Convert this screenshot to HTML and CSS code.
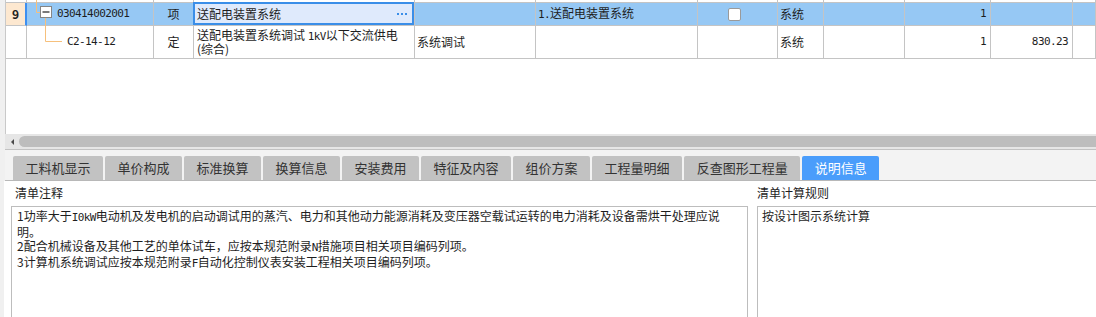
FILE: index.html
```html
<!DOCTYPE html>
<html lang="zh-CN">
<head>
<meta charset="utf-8">
<title>清单说明信息</title>
<link rel="stylesheet" href="styles.css">
</head>
<body>
<div class="app">
  <div class="top">
    <div class="grid">
      <div class="c"></div><div class="c"></div><div class="c"></div><div class="c"></div><div class="c"></div><div class="c"></div>
      <div class="c"></div><div class="c"></div><div class="c"></div><div class="c"></div><div class="c"></div><div class="c"></div>

      <div class="c rn rn-sel">9</div>
      <div class="c row-sel code code-1">
        <svg class="tree" width="40" height="45" viewBox="0 0 40 45">
          <path d="M9.5 -3 V9.5 H13.5" fill="none" stroke="#f6c07c" stroke-width="1"/>
          <path d="M18.5 14.5 V38.5 H35" fill="none" stroke="#f6c07c" stroke-width="1"/>
          <rect x="13.5" y="3.5" width="11" height="11" fill="#ffffff" stroke="#858585"/>
          <path d="M15.5 9 H22.5" stroke="#222" stroke-width="1.2"/>
        </svg>
        <span class="num">030414002001</span>
      </div>
      <div class="c row-sel ctr">项</div>
      <div class="c name-sel"><span>送配电装置系统</span><span class="dots"><i></i><i></i><i></i></span></div>
      <div class="c row-sel"></div>
      <div class="c row-sel pl"><span><span class="num">1.</span>送配电装置系统</span></div>
      <div class="c row-sel ctr"><span class="chk"></span></div>
      <div class="c row-sel">系统</div>
      <div class="c row-sel"></div>
      <div class="c row-sel rt"><span class="num">1</span></div>
      <div class="c row-sel"></div>
      <div class="c row-sel"></div>

      <div class="c rn"></div>
      <div class="c code code-2"><span class="num">C2-14-12</span></div>
      <div class="c ctr">定</div>
      <div class="c name-2"><div class="wrap">送配电装置系统调试 <span class="num">1kV</span>以下交流供电<br>(综合)</div></div>
      <div class="c">系统调试</div>
      <div class="c"></div>
      <div class="c"></div>
      <div class="c">系统</div>
      <div class="c"></div>
      <div class="c rt"><span class="num">1</span></div>
      <div class="c rt"><span class="num">830.23</span></div>
      <div class="c"></div>
    </div>
  </div>

  <div class="hscroll">
    <span class="arrow"></span>
    <div class="thumb"></div>
  </div>

  <div class="tabs">
    <div class="tab">工料机显示</div>
    <div class="tab">单价构成</div>
    <div class="tab">标准换算</div>
    <div class="tab">换算信息</div>
    <div class="tab">安装费用</div>
    <div class="tab">特征及内容</div>
    <div class="tab">组价方案</div>
    <div class="tab">工程量明细</div>
    <div class="tab">反查图形工程量</div>
    <div class="tab active">说明信息</div>
  </div>

  <div class="panel">
    <div class="col col-left">
      <div class="label">清单注释</div>
      <div class="box">
        <div class="para">1功率大于<span class="num">I0kW</span>电动机及发电机的启动调试用的蒸汽、电力和其他动力能源消耗及变压器空载试运转的电力消耗及设备需烘干处理应说</div>
        <div class="para">明。</div>
        <div class="para">2配合机械设备及其他工艺的单体试车，应按本规范附录<span class="num">N</span>措施项目相关项目编码列项。</div>
        <div class="para">3计算机系统调试应按本规范附录<span class="num">F</span>自动化控制仪表安装工程相关项目编码列项。</div>
      </div>
    </div>
    <div class="col col-right">
      <div class="label label-right">清单计算规则</div>
      <div class="box box-right">
        <div class="para">按设计图示系统计算</div>
      </div>
    </div>
  </div>
</div>
</body>
</html>
```

FILE: styles.css
```css
* { box-sizing: border-box; }

html, body {
  margin: 0;
  padding: 0;
}

body {
  background: #f0f0f0;
  font-family: "Noto Sans CJK SC", "Noto Sans", sans-serif;
  font-size: 12px;
  color: #1e1e1e;
}

.app {
  width: 1096px;
  height: 317px;
  overflow: hidden;
  display: flex;
  flex-direction: column;
}

/* ---------- top grid ---------- */
.top {
  height: 134px;
  margin-left: 5px;
  background: #ffffff;
  flex: none;
}

.grid {
  display: grid;
  grid-template-columns: 21px 127px 40px 221px 121px 162px 80px 46px 81px 86px 82px 1fr;
  grid-template-rows: 3px 23px 33px;
  height: 134px;
  border-left: 1px solid #c9c9c9;
  align-content: start;
}

.c {
  border-right: 1px solid #c4c4c4;
  border-bottom: 1px solid #c4c4c4;
  display: flex;
  align-items: center;
  padding: 0 2px;
  white-space: nowrap;
  min-width: 0;
  line-height: 14px;
}

.num {
  font-family: "DejaVu Sans Mono", "Liberation Mono", monospace;
  font-size: 11px;
  letter-spacing: -0.6px;
}

.row-sel { background: #96c8f4; }

.rn {
  justify-content: center;
  font-weight: bold;
  padding: 0;
}

.rn-sel {
  background: #fde8d0;
  border-right: 2px solid #3d8ff0;
}

.ctr { justify-content: center; }
.rt { justify-content: flex-end; padding-right: 4px; }
.pl { padding-left: 2px; }

.code { position: relative; }
.code-1 { padding-left: 30px; }
.code-2 { padding-left: 40px; }

.tree {
  position: absolute;
  left: 0;
  top: 0;
  overflow: visible;
}

.name-sel {
  position: relative;
  background: #dfeafc;
  padding-left: 3px;
  justify-content: space-between;
}

.name-sel::after {
  content: "";
  position: absolute;
  top: -1px;
  left: -1px;
  right: 0;
  bottom: 0;
  border: 2px solid #3a8ee8;
  pointer-events: none;
}

.dots {
  display: flex;
  gap: 2px;
  margin-right: 5px;
}

.dots i {
  display: block;
  width: 2px;
  height: 2px;
  background: #3a8ee8;
}

.name-2 {
  white-space: normal;
  padding-left: 3px;
}

.wrap {
  line-height: 12px;
}

.chk {
  width: 13px;
  height: 13px;
  border: 1px solid #9a9a9a;
  border-radius: 2px;
  background: #ffffff;
  margin-left: -6px;
}

/* ---------- horizontal scrollbar ---------- */
.hscroll {
  flex: none;
  height: 16px;
  margin-left: 5px;
  background: #e6e6e6;
  border-bottom: 1px solid #c2c2c2;
  display: flex;
  align-items: flex-start;
  padding-top: 2px;
  padding-left: 6px;
}

.arrow {
  width: 0;
  height: 0;
  border-top: 3px solid transparent;
  border-bottom: 3px solid transparent;
  border-right: 3px solid #4a4a4a;
  margin-top: 3px;
}

.thumb {
  flex: 1;
  height: 11px;
  margin-left: 5px;
  background: #bdbdbd;
  border-radius: 6px 0 0 6px;
}

/* ---------- tabs ---------- */
.tabs {
  flex: none;
  height: 31px;
  margin-left: 5px;
  background: #f3f3f3;
  border-bottom: 1px solid #b8b8b8;
  display: flex;
  align-items: flex-end;
  gap: 2px;
  padding-left: 8px;
}

.tab {
  height: 24px;
  padding: 0 12.5px;
  background: #c2c2c2;
  color: #333333;
  font-size: 13px;
  line-height: 24px;
  border-radius: 2px 2px 0 0;
  white-space: nowrap;
}

.tab.active {
  background: #4a9dfb;
  color: #ffffff;
}

/* ---------- bottom panel ---------- */
.panel {
  flex: 1;
  margin-left: 4px;
  background: #ffffff;
  display: flex;
  gap: 9px;
  padding-left: 7px;
  padding-top: 2px;
  min-height: 0;
}

.col {
  display: flex;
  flex-direction: column;
  gap: 3px;
}

.col-left { width: 737px; }
.col-right { flex: 1; margin-right: -4px; }

.label {
  height: 20px;
  line-height: 20px;
  padding-left: 4px;
  color: #1e1e1e;
}

.label-right { padding-left: 0; }

.box {
  flex: 1;
  border: 1px solid #bdbdbd;
  border-bottom: none;
  padding: 2px 5px;
  line-height: 14px;
  color: #1e1e1e;
}

.para {
  white-space: nowrap;
}

.box-right { padding-left: 4px; }
```
